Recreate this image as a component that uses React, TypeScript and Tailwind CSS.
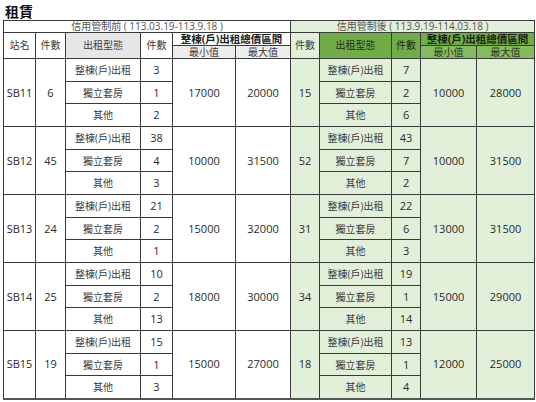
import React from 'react';

interface Group {
  station: string;
  total: number;
  counts: number[];
  min: number;
  max: number;
}

const types = ['整棟(戶)出租', '獨立套房', '其他'];

const before: Group[] = [
  { station: 'SB11', total: 6, counts: [3, 1, 2], min: 17000, max: 20000 },
  { station: 'SB12', total: 45, counts: [38, 4, 3], min: 10000, max: 31500 },
  { station: 'SB13', total: 24, counts: [21, 2, 1], min: 15000, max: 32000 },
  { station: 'SB14', total: 25, counts: [10, 2, 13], min: 18000, max: 30000 },
  { station: 'SB15', total: 19, counts: [15, 1, 3], min: 15000, max: 27000 },
];

const after: Group[] = [
  { station: 'SB11', total: 15, counts: [7, 2, 6], min: 10000, max: 28000 },
  { station: 'SB12', total: 52, counts: [43, 7, 2], min: 10000, max: 31500 },
  { station: 'SB13', total: 31, counts: [22, 6, 3], min: 13000, max: 31500 },
  { station: 'SB14', total: 34, counts: [19, 1, 14], min: 15000, max: 29000 },
  { station: 'SB15', total: 18, counts: [13, 1, 4], min: 12000, max: 25000 },
];

const rowHeights = ['h-[23px]', 'h-[22px]', 'h-[23px]'];

const cell = 'border border-[#3a3a3a] p-0 text-center align-middle';
const zh = 'text-[10px] text-[#3c3c3c]';
const num = 'text-[11px] text-[#2a2a2a]';
const left = 'bg-white';
const right = 'bg-[#e2efd9]';

export default function App() {
  return (
    <div
      className="w-[536px] h-[402px] bg-white overflow-hidden"
      style={{ fontFamily: '"Open Sans", "Noto Sans CJK TC", sans-serif' }}
    >
      <div className="pl-[5px] pt-[3px] h-[20px] text-[14px] leading-[17px] font-bold text-[#111]">
        租賃
      </div>
      <table className="ml-[3px] w-[531px] table-fixed border-collapse border-b-2 border-b-[#555]">
        <colgroup>
          <col className="w-[32px]" />
          <col className="w-[30px]" />
          <col className="w-[75px]" />
          <col className="w-[32px]" />
          <col className="w-[63px]" />
          <col className="w-[55px]" />
          <col className="w-[29px]" />
          <col className="w-[72px]" />
          <col className="w-[29px]" />
          <col className="w-[56px]" />
          <col className="w-[58px]" />
        </colgroup>
        <thead>
          <tr className="h-[12px] leading-[11px]">
            <td colSpan={6} className={`${cell} ${left} text-[10px] text-[#555]`}>
              信用管制前 ( 113.03.19-113.9.18 )
            </td>
            <td colSpan={5} className={`${cell} ${right} text-[10px] text-[#555]`}>
              信用管制後 ( 113.9.19-114.03.18 )
            </td>
          </tr>
          <tr className="h-[13px] leading-[11px]">
            <td rowSpan={2} className={`${cell} ${left} ${zh}`}>站名</td>
            <td rowSpan={2} className={`${cell} ${left} ${zh}`}>件數</td>
            <td rowSpan={2} className={`${cell} bg-[#e7e6e6] ${zh}`}>出租型態</td>
            <td rowSpan={2} className={`${cell} ${left} ${zh}`}>件數</td>
            <td colSpan={2} className={`${cell} ${left} text-[10.5px] font-bold text-[#222]`}>
              整棟(戶)出租總價區間
            </td>
            <td rowSpan={2} className={`${cell} ${right} ${zh}`}>件數</td>
            <td rowSpan={2} className={`${cell} bg-[#70ad47] text-[10px] text-[#1f2a17]`}>出租型態</td>
            <td rowSpan={2} className={`${cell} bg-[#70ad47] text-[10px] text-[#1f2a17]`}>件數</td>
            <td colSpan={2} className={`${cell} bg-[#70ad47] text-[10.5px] font-bold text-[#1a2412]`}>
              整棟(戶)出租總價區間
            </td>
          </tr>
          <tr className="h-[13px] leading-[11px]">
            <td className={`${cell} bg-[#ededed] ${zh}`}>最小值</td>
            <td className={`${cell} bg-[#ededed] ${zh}`}>最大值</td>
            <td className={`${cell} bg-[#84bb5f] text-[10px] text-[#2a3a20]`}>最小值</td>
            <td className={`${cell} bg-[#84bb5f] text-[10px] text-[#2a3a20]`}>最大值</td>
          </tr>
        </thead>
        <tbody>
          {before.map((b, gi) => {
            const a = after[gi];
            return types.map((t, i) => (
              <tr key={`${b.station}-${i}`} className={`${rowHeights[i]} leading-[12px]`}>
                {i === 0 && (
                  <>
                    <td rowSpan={3} className={`${cell} ${left} ${num}`}>{b.station}</td>
                    <td rowSpan={3} className={`${cell} ${left} ${num}`}>{b.total}</td>
                  </>
                )}
                <td className={`${cell} ${left} ${zh}`}>{t}</td>
                <td className={`${cell} ${left} ${num}`}>{b.counts[i]}</td>
                {i === 0 && (
                  <>
                    <td rowSpan={3} className={`${cell} ${left} ${num}`}>{b.min}</td>
                    <td rowSpan={3} className={`${cell} ${left} ${num}`}>{b.max}</td>
                    <td rowSpan={3} className={`${cell} ${right} ${num}`}>{a.total}</td>
                  </>
                )}
                <td className={`${cell} ${right} ${zh}`}>{t}</td>
                <td className={`${cell} ${right} ${num}`}>{a.counts[i]}</td>
                {i === 0 && (
                  <>
                    <td rowSpan={3} className={`${cell} ${right} ${num}`}>{a.min}</td>
                    <td rowSpan={3} className={`${cell} ${right} ${num}`}>{a.max}</td>
                  </>
                )}
              </tr>
            ));
          })}
        </tbody>
      </table>
    </div>
  );
}
